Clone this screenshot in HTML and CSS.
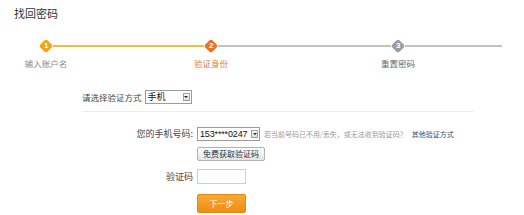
FILE: index.html
```html
<!DOCTYPE html>
<html lang="zh-CN">
<head>
<meta charset="utf-8">
<title>找回密码</title>
<link rel="stylesheet" href="styles.css">
</head>
<body>
<div class="page">
  <h1 class="title">找回密码</h1>

  <div class="steps">
    <div class="step done">
      <div class="dot"><span>1</span></div>
      <div class="step-label">输入账户名</div>
    </div>
    <div class="bar bar-done"></div>
    <div class="step current">
      <div class="dot"><span>2</span></div>
      <div class="step-label">验证身份</div>
    </div>
    <div class="bar bar-todo bar-mid"></div>
    <div class="step todo">
      <div class="dot"><span>3</span></div>
      <div class="step-label">重置密码</div>
    </div>
    <div class="bar bar-todo bar-end"></div>
  </div>

  <div class="method">
    <span class="method-label">请选择验证方式</span>
    <div class="sel sel-method"><span class="sel-text">手机</span><span class="sel-arrow"><i></i></span></div>
  </div>

  <div class="form">
    <div class="row row-phone">
      <div class="row-label">您的手机号码:</div>
      <div class="row-field">
        <div class="sel sel-phone"><span class="sel-text num">153****0247</span><span class="sel-arrow"><i></i></span></div>
        <span class="hint">若当前号码已不用/丢失，或无法收到验证码？</span>
        <a class="link" href="#">其他验证方式</a>
      </div>
    </div>
    <div class="row row-send">
      <div class="row-label"></div>
      <div class="row-field"><button class="btn-send" type="button">免费获取验证码</button></div>
    </div>
    <div class="row row-code">
      <div class="row-label">验证码</div>
      <div class="row-field"><input class="code-input" type="text"></div>
    </div>
    <div class="row row-next">
      <div class="row-label"></div>
      <div class="row-field"><button class="btn-next" type="button">下一步</button></div>
    </div>
  </div>
</div>
</body>
</html>
```

FILE: styles.css
```css
html, body {
  margin: 0;
  padding: 0;
  background: #ffffff;
}

body {
  font-family: "Noto Sans CJK SC", "Liberation Sans", sans-serif;
  color: #333;
}

.page {
  width: 524px;
  height: 215px;
  overflow: hidden;
}

.title {
  margin: 0;
  padding: 6px 0 0 14px;
  font-size: 11px;
  line-height: 14px;
  font-weight: normal;
  color: #333;
}

/* ---------- steps ---------- */
.steps {
  display: flex;
  align-items: flex-start;
  margin: 19px 0 0 39px;
}

.step {
  flex: 0 0 auto;
  width: 60px;
  margin: 0 -23px;
  display: flex;
  flex-direction: column;
  align-items: center;
}

.dot {
  width: 10px;
  height: 10px;
  margin: 2px;
  border-radius: 2px;
  transform: rotate(45deg);
  display: flex;
  align-items: center;
  justify-content: center;
}

.dot span {
  transform: rotate(-45deg);
  font-family: "Liberation Sans", sans-serif;
  font-weight: bold;
  font-size: 8px;
  line-height: 8px;
  color: #fff;
}

.done .dot { background: #f2a31b; }
.current .dot { background: #e8722a; }
.todo .dot { background: #9c9c9c; }

.step-label {
  margin-top: 5px;
  font-size: 8.5px;
  line-height: 10px;
  white-space: nowrap;
}

.done .step-label { color: #8a8a8a; }
.current .step-label { color: #e47a3a; }
.todo .step-label { color: #6a6a6a; }

.bar {
  flex: 0 0 auto;
  height: 2px;
  margin-top: 6px;
}

.bar-done {
  width: 151px;
  background: #efbd45;
}

.bar-todo { background: #c2c2c2; }
.bar-mid { width: 173px; }
.bar-end { width: 97px; }

/* ---------- method row ---------- */
.method {
  display: flex;
  align-items: center;
  gap: 3px;
  margin: 22px 0 0 82px;
  width: 392px;
  padding-bottom: 7px;
  border-bottom: 1px solid #ededed;
}

.method-label {
  font-size: 8.5px;
  line-height: 14px;
  color: #444;
}

.sel {
  display: inline-flex;
  align-items: center;
  justify-content: space-between;
  box-sizing: border-box;
  height: 14px;
  border: 1px solid #9b9b9b;
  background: #fff;
  padding: 0 1px 0 2px;
  flex: 0 0 auto;
}

.sel-method { width: 47px; }
.sel-phone { width: 63px; height: 14px; }

.sel-text {
  font-size: 9px;
  line-height: 12px;
  color: #111;
  white-space: nowrap;
}

.num {
  font-family: "Liberation Sans", sans-serif;
  font-size: 9px;
  letter-spacing: -0.15px;
  margin-right: 1px;
}

.sel-arrow {
  box-sizing: border-box;
  width: 7px;
  height: 8px;
  border: 1px solid #a0a0a0;
  background: linear-gradient(#fafafa, #dedede);
  display: flex;
  align-items: center;
  justify-content: center;
  flex: 0 0 auto;
}

.sel-arrow i {
  display: block;
  width: 0;
  height: 0;
  border-left: 2px solid transparent;
  border-right: 2px solid transparent;
  border-top: 2px solid #222;
}

/* ---------- form ---------- */
.form {
  margin: 15px 0 0 82px;
  display: flex;
  flex-direction: column;
}

.row {
  display: flex;
  align-items: center;
  gap: 4px;
}

.row-label {
  width: 111px;
  flex: 0 0 auto;
  text-align: right;
  font-size: 9px;
  line-height: 14px;
  color: #444;
}

.row-field {
  display: flex;
  align-items: center;
}

.row-send { margin-top: 6px; }
.row-code { margin-top: 8px; }
.row-next { margin-top: 10px; }

.hint {
  margin-left: 4px;
  font-size: 7px;
  line-height: 10px;
  color: #9a9a9a;
  white-space: nowrap;
}

.link {
  margin-left: 5px;
  font-size: 7px;
  line-height: 10px;
  color: #34527a;
  text-decoration: none;
  white-space: nowrap;
}

.btn-send {
  box-sizing: border-box;
  width: 68px;
  height: 14px;
  padding: 0;
  margin: 0;
  border: 1px solid #b2b2b2;
  border-radius: 2px;
  background: linear-gradient(#fdfdfd, #e4e4e4);
  font-family: "Noto Sans CJK SC", sans-serif;
  font-size: 8px;
  line-height: 12px;
  color: #333;
}

.code-input {
  box-sizing: border-box;
  width: 49px;
  height: 15px;
  margin: 0;
  padding: 0;
  border: 1px solid #cfcfcf;
  background: #fff;
}

.btn-next {
  box-sizing: border-box;
  width: 49px;
  height: 19px;
  margin: 0;
  padding: 0;
  border: 1px solid #e48a10;
  border-radius: 2px;
  background: linear-gradient(#f8a937, #ee8d14);
  font-family: "Noto Sans CJK SC", sans-serif;
  font-size: 8px;
  line-height: 17px;
  color: #fff;
}
```
